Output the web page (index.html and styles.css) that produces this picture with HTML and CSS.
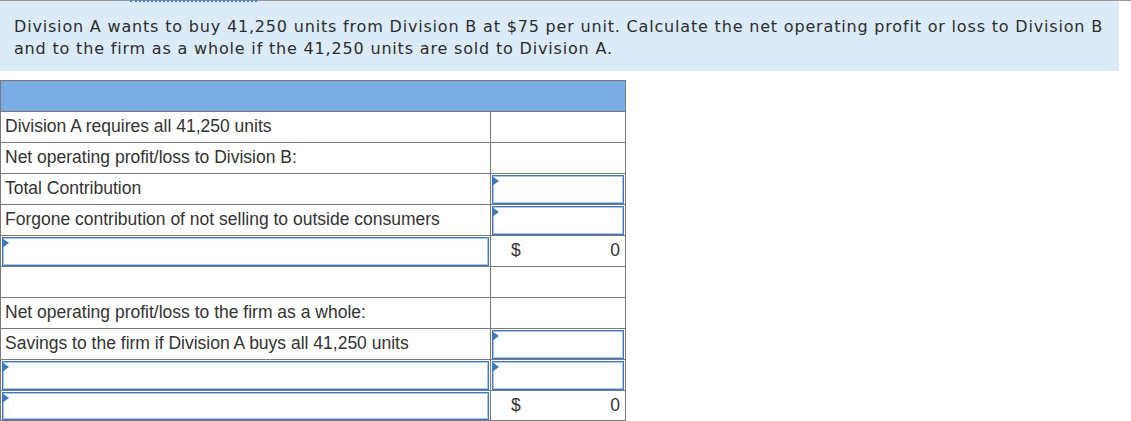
FILE: index.html
```html
<!DOCTYPE html>
<html>
<head>
<meta charset="utf-8">
<link rel="stylesheet" href="styles.css">
</head>
<body>
<div class="topline"><span class="focus-mark"></span></div>
<div class="question">Division A wants to buy 41,250 units from Division B at $75 per unit. Calculate the net operating profit or loss to Division B and to the firm as a whole if the 41,250 units are sold to Division A.</div>
<table class="sheet">
  <colgroup><col class="c1"><col class="c2"></colgroup>
  <tr class="head"><td colspan="2"></td></tr>
  <tr><td class="lbl">Division A requires all 41,250 units</td><td></td></tr>
  <tr><td class="lbl">Net operating profit/loss to Division B:</td><td></td></tr>
  <tr><td class="lbl">Total Contribution</td><td class="in"><div class="field"></div></td></tr>
  <tr><td class="lbl">Forgone contribution of not selling to outside consumers</td><td class="in"><div class="field"></div></td></tr>
  <tr><td class="in"><div class="field"></div></td><td class="amt"><span>$</span><span>0</span></td></tr>
  <tr><td></td><td></td></tr>
  <tr><td class="lbl">Net operating profit/loss to the firm as a whole:</td><td></td></tr>
  <tr><td class="lbl">Savings to the firm if Division A buys all 41,250 units</td><td class="in"><div class="field"></div></td></tr>
  <tr><td class="in"><div class="field"></div></td><td class="in"><div class="field"></div></td></tr>
  <tr class="last"><td class="in"><div class="field"></div></td><td class="amt"><span>$</span><span>0</span></td></tr>
</table>
</body>
</html>
```
FILE: styles.css
```css
html, body {
  margin: 0;
  padding: 0;
  background: #fff;
}
.topline {
  position: relative;
  height: 1px;
  background: #9a9a9a;
}
.focus-mark {
  position: absolute;
  left: 130px;
  top: 0;
  width: 127px;
  border-top: 2px dotted #4a7fc4;
}
.question {
  margin-right: 12px;
  background: #dbebf9;
  color: #2d2d2d;
  font-family: "DejaVu Sans", Verdana, sans-serif;
  font-size: 16px;
  letter-spacing: 0.82px;
  line-height: 22px;
  padding: 15px 0 11px 14px;
}
.sheet {
  margin-top: 9px;
  border-collapse: collapse;
  width: 625px;
  table-layout: fixed;
  font-family: "Liberation Sans", Arial, sans-serif;
  font-size: 17.5px;
  color: #333;
}
.c1 { width: 490px; }
.c2 { width: 135px; }
.sheet td {
  border: 1px solid #7a7a7a;
  height: 31px;
  padding: 0;
  box-sizing: border-box;
}
.sheet tr.last td {
  height: 30px;
}
.sheet tr.head td {
  background: #7aade3;
}
.sheet td.lbl {
  padding: 0 0 2px 4px;
  white-space: nowrap;
}
.sheet td.in {
  padding: 0 1px;
}
.field {
  position: relative;
  height: 29px;
  box-sizing: border-box;
  border: 1px solid #3f78c0;
  box-shadow: inset 0 0 0 1px #a8c6ec;
  background: #fff;
}
.last .field {
  height: 28px;
}
.field::before {
  content: "";
  position: absolute;
  left: -1px;
  top: 0;
  border-top: 5px solid transparent;
  border-bottom: 5px solid transparent;
  border-left: 7px solid #3d76c2;
}
.sheet td.amt {
  padding: 0 5px 1px 20px;
}
.amt span:first-child { float: left; }
.amt span:last-child { float: right; }
```
